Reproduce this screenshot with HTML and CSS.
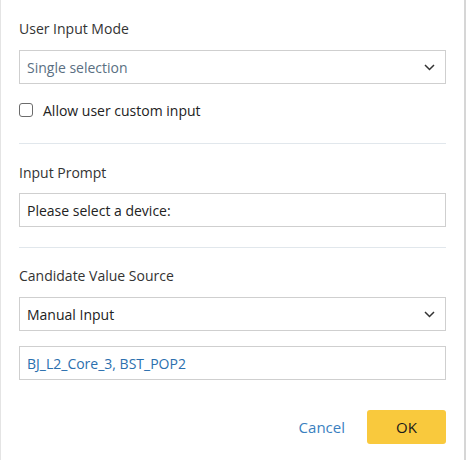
FILE: index.html
```html
<!DOCTYPE html>
<html>
<head>
<meta charset="utf-8">
<link rel="stylesheet" href="styles.css">
</head>
<body>
<div class="dialog">
  <div class="label">User Input Mode</div>
  <div class="field select mt12">
    <span class="val muted">Single selection</span>
    <svg class="chev" width="11" height="7" viewBox="0 0 11 7"><path d="M1 1 L5.5 5.5 L10 1" fill="none" stroke="#333" stroke-width="1.5"/></svg>
  </div>
  <label class="check">
    <span class="box"></span>
    <span>Allow user custom input</span>
  </label>
  <div class="divider d1"></div>
  <div class="label mt20">Input Prompt</div>
  <div class="field mt11">
    <span class="val dark">Please select a device:</span>
  </div>
  <div class="divider d2"></div>
  <div class="label mt19">Candidate Value Source</div>
  <div class="field select mt12">
    <span class="val dark">Manual Input</span>
    <svg class="chev" width="11" height="7" viewBox="0 0 11 7"><path d="M1 1 L5.5 5.5 L10 1" fill="none" stroke="#333" stroke-width="1.5"/></svg>
  </div>
  <div class="field mt15">
    <span class="val blue">BJ_L2_Core_3, BST_POP2</span>
  </div>
  <div class="actions">
    <span class="cancel">Cancel</span>
    <span class="ok">OK</span>
  </div>
</div>
</body>
</html>
```
FILE: styles.css
```css
html, body {
  margin: 0;
  padding: 0;
  background: #fff;
}
body {
  font-family: "Open Sans", "Noto Sans", sans-serif;
  font-size: 14px;
  color: #333;
}
.dialog {
  width: 466px;
  height: 460px;
  box-sizing: border-box;
  border-left: 1px solid #e4e4e4;
  border-right: 2px solid #d6d6d6;
  padding: 20px 18px 0 18px;
}
.label {
  line-height: 18px;
  height: 18px;
  color: #333;
}
.field {
  box-sizing: border-box;
  height: 34px;
  border: 1px solid #cfcfcf;
  display: flex;
  align-items: center;
  padding: 0 10px 0 7px;
}
.select {
  justify-content: space-between;
}
.val { white-space: nowrap; }
.muted { color: #5a6f82; }
.dark { color: #222; }
.blue { color: #2b6fae; }
.chev { display: block; }
.mt11 { margin-top: 11px; }
.mt12 { margin-top: 12px; }
.mt15 { margin-top: 15px; }
.mt19 { margin-top: 19px; }
.mt20 { margin-top: 20px; }
.check {
  display: flex;
  align-items: center;
  height: 18px;
  margin-top: 17px;
  color: #222;
}
.box {
  width: 14px;
  height: 14px;
  box-sizing: border-box;
  border: 1px solid #6b6b6b;
  border-radius: 3px;
  margin-right: 10px;
}
.divider {
  height: 1px;
  background: #e1e7ec;
}
.d1 { margin-top: 24px; }
.d2 { margin-top: 20px; }
.actions {
  margin-top: 30px;
  display: flex;
  justify-content: flex-end;
  align-items: center;
  gap: 22px;
}
.cancel {
  color: #3a7fc0;
  font-size: 15px;
}
.ok {
  width: 79px;
  height: 34px;
  box-sizing: border-box;
  background: #f9c93d;
  border-radius: 3px;
  color: #1a1a1a;
  font-size: 15px;
  display: flex;
  align-items: center;
  justify-content: center;
}
```
